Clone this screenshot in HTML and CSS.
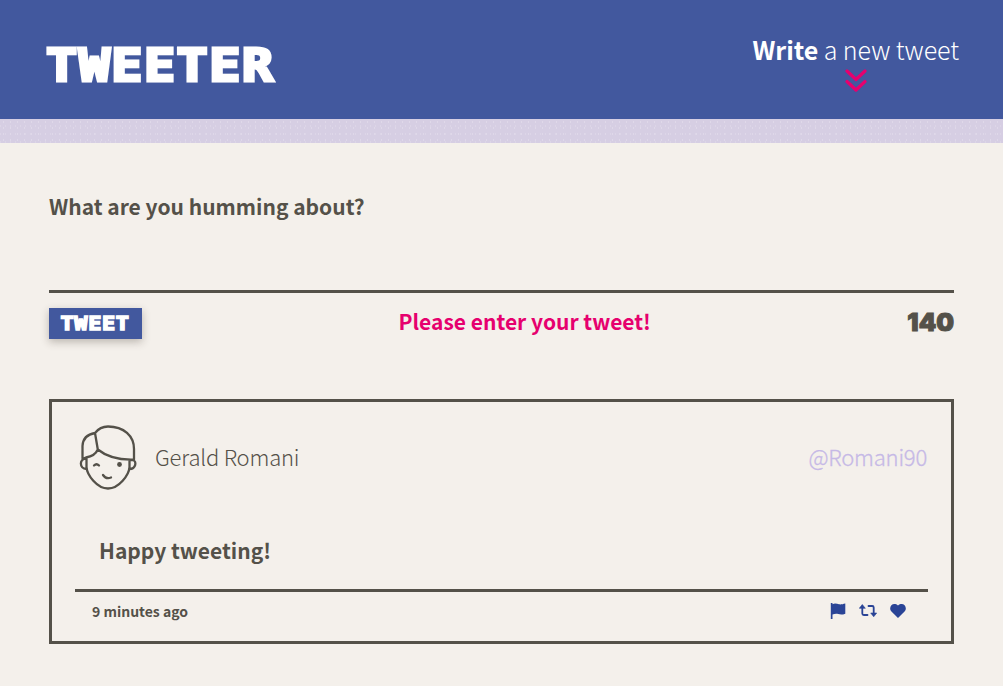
FILE: index.html
```html
<!DOCTYPE html>
<html lang="en">
<head>
<meta charset="utf-8">
<title>Tweeter</title>
<link rel="stylesheet" href="styles.css">
</head>
<body>
<header class="nav">
  <h1 class="logo">TWEETER</h1>
  <div class="compose">
    <div class="compose-label"><b>Write</b> a new tweet</div>
    <svg class="chevrons" viewBox="0 0 22 23" width="22" height="23"><path d="M2 2l9 8.500L20 2M2 12.500l9 8.500 9-8.500"/></svg>
  </div>
</header>
<div class="band"></div>
<main class="container">
  <form class="new-tweet">
    <div class="prompt"><span>What are you humming about?</span></div>
    <div class="controls">
      <button class="submit" type="button"><span>TWEET</span></button>
      <div class="error">Please enter your tweet!</div>
      <div class="counter">140</div>
    </div>
  </form>
  <article class="tweet">
    <div class="tweet-head">
      <svg class="avatar" viewBox="0 0 75 85" width="75" height="85">
        <path d="M12.500 43V31Q13 20 25 18Q30 11.500 38 11.500C54 11.500 64 21 64 34V44.500C49 45 37 42 27.800 34.500Q25 41 16 42.500L12.500 44M25 18L27.800 34.500M16.500 42.500V52C17 60 27 73.500 38 73.500S59 60 59.500 52V45M16.500 43.500C9 43 9 54 16.500 54M59.500 45H63C67 46 66 54 59.500 54"/>
        <path d="M24 50.500q2.500-2.500 5 0M33 60q3 4.500 8 2.500"/>
        <circle cx="49.500" cy="49.500" r="2.400"/>
      </svg>
      <span class="name">Gerald Romani</span>
      <span class="handle">@Romani90</span>
    </div>
    <p class="message">Happy tweeting!</p>
    <footer class="tweet-foot">
      <span class="age">9 minutes ago</span>
      <span class="actions">
        <svg viewBox="0 0 16 16" width="16" height="16"><path d="M.8 0h1.700v1.200C5-.3 7 .8 9 1.300c2 .4 3.500-.2 6.300-.8v10.200c-3 1.200-5 1-7 .4-2-.5-3.500-.4-5.800.5V16H.8z"/></svg>
        <svg viewBox="0 0 18 14" width="18" height="14"><g fill="none" stroke="#2a4496" stroke-width="1.800" stroke-linecap="round"><path d="M3.300 3v6.500q0 1.500 1.500 1.500H8.500M9.500 2h3.700q1.500 0 1.500 1.500V10"/></g><path d="M3.300.5L6.300 4.300H.3zM14.700 12.800l3-3.800h-6z" stroke="#2a4496" stroke-width=".6" stroke-linejoin="round"/></svg>
        <svg viewBox="0 0 16 14" width="16" height="14"><path d="M8 14L1.200 7.200C-2 3.500 2.800-2.800 8 1.500c5.200-4.300 10 2 6.800 5.700z"/></svg>
      </span>
    </footer>
  </article>
</main>
</body>
</html>
```
FILE: styles.css
```css
* { box-sizing: border-box; }
body {
  margin: 0;
  background: #f4f0eb;
  color: #545149;
  font-family: "Noto Sans CJK SC", "Noto Sans", sans-serif;
  min-height: 686px;
}
.nav {
  height: 119px;
  padding: 0 44px 0 45px;
  background: #42589e;
  color: #fff;
  display: flex;
  justify-content: space-between;
}
.logo {
  margin: 36px 0 0 1px;
  font: 700 45px/60px "DejaVu Sans Mono", monospace;
  letter-spacing: 1.3px;
  -webkit-text-stroke: 3.2px #fff;
  transform: scaleX(1.15);
  transform-origin: 0 0;
}
.compose {
  padding-top: 32px;
  display: flex;
  flex-direction: column;
  align-items: center;
}
.compose-label { font-size: 25px; line-height: 34px; font-weight: 300; letter-spacing: -0.05px; white-space: nowrap; }
.compose-label b { font-weight: 700; }
.chevrons { margin-top: 3px; fill: none; stroke: #e6006e; stroke-width: 3.2; stroke-linecap: round; stroke-linejoin: round; }
.band {
  height: 24px;
  background-color: #d6cee3;
  background-image:
    radial-gradient(circle, #dfd8e9 0.5px, transparent 1px),
    radial-gradient(circle, #dcd5e7 0.5px, transparent 1px);
  background-size: 7px 6px, 5px 8px;
  background-position: 0 0, 3px 3px;
}
.container { padding: 47px 49px 0; }
.prompt {
  height: 103px;
  border-bottom: 3px solid #545149;
  font-size: 21px;
  line-height: 32px;
  font-weight: 700;
}
.controls {
  height: 106px;
  padding-top: 15px;
  display: flex;
  justify-content: space-between;
  align-items: flex-start;
}
.submit {
  width: 93px;
  height: 31px;
  padding: 0;
  border: 0;
  background: #42589e;
  color: #fff;
  font: 700 19px/31px "DejaVu Sans Mono", monospace;
  -webkit-text-stroke: 1.5px #fff;
  box-shadow: 0 3px 8px rgba(60, 50, 40, 0.3);
}
.submit span { display: inline-block; letter-spacing: 0.6px; transform: scaleX(1.15); }
.error { color: #e6006e; font-size: 21px; line-height: 26px; font-weight: 700; }
.counter { font: 900 25px/28px Inter, sans-serif; -webkit-text-stroke: 1px #545149; }
.tweet {
  height: 245px;
  border: 3px solid #545149;
  padding: 13px 23px 0;
}
.tweet-head { height: 85px; display: flex; align-items: center; font-size: 22px; font-weight: 300; letter-spacing: -0.2px; }
.avatar { margin-left: -5px; fill: none; stroke: #545149; stroke-width: 2.3; stroke-linecap: round; stroke-linejoin: round; flex: none; }
.avatar circle { fill: #545149; stroke: none; }
.name { margin-left: 10px; padding-bottom: 4px; }
.handle { margin-left: auto; padding: 0 1px 4px 0; color: #c6b9e6; -webkit-text-stroke: 0.3px #c6b9e6; }
.message { margin: 0; padding: 34px 0 0 24px; height: 89px; font-size: 21px; line-height: 32px; font-weight: 700; }
.tweet-foot {
  border-top: 3px solid #545149;
  padding: 6px 22px 0 17px;
  display: flex;
  justify-content: space-between;
  font-size: 14px;
  line-height: 27px;
  font-weight: 700;
}
.actions { display: flex; align-items: center; gap: 13px; height: 26px; fill: #2a4496; }
```
